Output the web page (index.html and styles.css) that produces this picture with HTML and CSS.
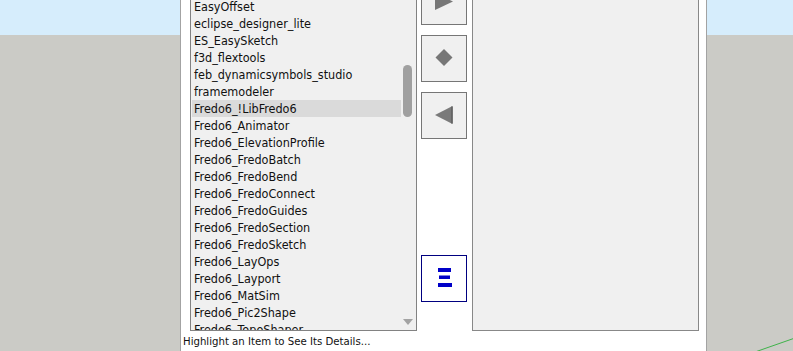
FILE: index.html
```html
<!DOCTYPE html>
<html>
<head>
<meta charset="utf-8">
<link rel="stylesheet" href="styles.css">
</head>
<body>
<div class="scene">
  <div class="backdrop"></div>
  <div class="dialog">
    <div class="main">
      <div class="listbox">
        <ul class="items">
          <li>EasyOffset</li>
          <li>eclipse_designer_lite</li>
          <li>ES_EasySketch</li>
          <li>f3d_flextools</li>
          <li>feb_dynamicsymbols_studio</li>
          <li>framemodeler</li>
          <li class="selected">Fredo6_!LibFredo6</li>
          <li>Fredo6_Animator</li>
          <li>Fredo6_ElevationProfile</li>
          <li>Fredo6_FredoBatch</li>
          <li>Fredo6_FredoBend</li>
          <li>Fredo6_FredoConnect</li>
          <li>Fredo6_FredoGuides</li>
          <li>Fredo6_FredoSection</li>
          <li>Fredo6_FredoSketch</li>
          <li>Fredo6_LayOps</li>
          <li>Fredo6_Layport</li>
          <li>Fredo6_MatSim</li>
          <li>Fredo6_Pic2Shape</li>
          <li>Fredo6_TopoShaper</li>
        </ul>
        <div class="scrollbar">
          <div class="thumb"></div>
          <svg class="arrow-down" width="10" height="7" viewBox="0 0 10 7"><polygon points="0,0 10,0 5,6" fill="#a3a3a3"/></svg>
        </div>
      </div>
      <div class="buttons">
        <div class="btn">
          <svg width="46" height="47" viewBox="0 0 46 47"><polygon points="14,15 32,23.5 14,32" fill="#777"/></svg>
        </div>
        <div class="btn">
          <svg width="46" height="47" viewBox="0 0 46 47"><polygon points="14.5,22.5 23,14 31.5,22.5 23,31" fill="#777"/></svg>
        </div>
        <div class="btn">
          <svg width="46" height="47" viewBox="0 0 46 47"><polygon points="14,23 31.5,14 31.5,32" fill="#7a7a7a"/><line x1="31" y1="14.5" x2="31" y2="31.5" stroke="#5f5f5f" stroke-width="1.5"/></svg>
        </div>
        <div class="btn btn-info">
          <svg width="44" height="45" viewBox="0 0 44 45"><rect x="16" y="12" width="13" height="4" fill="#0000c8"/><rect x="17" y="19.5" width="11" height="3.5" fill="#0000c8"/><rect x="16" y="27" width="14" height="4" fill="#0000c8"/></svg>
        </div>
      </div>
      <div class="details"></div>
    </div>
    <div class="status">Highlight an Item to See Its Details...</div>
  </div>
  <div class="backdrop right">
    <svg class="axis" width="86" height="351" viewBox="0 0 86 351"><line x1="48" y1="352" x2="88" y2="338" stroke="#3fb34a" stroke-width="1"/></svg>
  </div>
</div>
</body>
</html>
```

FILE: styles.css
```css
* { box-sizing: border-box; }
html, body { margin: 0; padding: 0; }
body {
  width: 793px;
  height: 351px;
  overflow: hidden;
  font-family: "DejaVu Sans Condensed", "DejaVu Sans", sans-serif;
  font-size: 12.5px;
  color: #111111;
}
.scene {
  display: flex;
  width: 793px;
  height: 351px;
  background: linear-gradient(to bottom, #d6edfc 0, #d6edfc 35px, #cbcbc6 35px, #cbcbc6 100%);
}
.backdrop { width: 180px; flex: none; }
.backdrop.right { width: 86px; position: relative; }
.axis { position: absolute; left: 0; top: 0; }
.dialog {
  width: 527px;
  flex: none;
  background: #ffffff;
  border-left: 1px solid #a3a3a3;
  border-right: 1px solid #a3a3a3;
  display: flex;
  flex-direction: column;
  overflow: hidden;
}
.main {
  display: flex;
  margin-top: -22px;
  padding-left: 9px;
  padding-right: 7px;
  height: 353px;
  flex: none;
}
.listbox {
  width: 227px;
  height: 353px;
  border: 1px solid #828282;
  border-top: none;
  background: #f0f0f0;
  display: flex;
  overflow: hidden;
}
.items {
  list-style: none;
  margin: 0;
  padding: 20px 0 0 1px;
  flex: 1;
}
.items li {
  height: 17px;
  line-height: 18px;
  padding-left: 2px;
  white-space: nowrap;
}
.items li.selected { background: #dadada; }
.scrollbar {
  width: 15px;
  flex: none;
  position: relative;
  background: #f0f0f0;
}
.thumb {
  position: absolute;
  left: 2px;
  top: 87px;
  width: 9px;
  height: 52px;
  border-radius: 5px;
  background: #a0a0a0;
}
.arrow-down { position: absolute; left: 1.5px; top: 341px; }
.buttons {
  width: 46px;
  margin-left: 4px;
  margin-right: 5px;
  display: flex;
  flex-direction: column;
  gap: 10px;
}
.btn {
  width: 46px;
  height: 47px;
  border: 1px solid #767676;
  background: #f0f0f0;
  flex: none;
}
.btn svg { display: block; margin: -1px; }
.btn-info {
  margin-top: 106px;
  background: #ffffff;
  border-color: #000080;
}
.btn-info svg { margin: 0; }
.details {
  width: 227px;
  height: 353px;
  border: 1px solid #888888;
  border-top: none;
  background: #f0f0f0;
}
.status {
  padding: 4px 0 0 2px;
  height: 20px;
  line-height: 14px;
  font-size: 11.3px;
  color: #111;
  white-space: nowrap;
}
```
